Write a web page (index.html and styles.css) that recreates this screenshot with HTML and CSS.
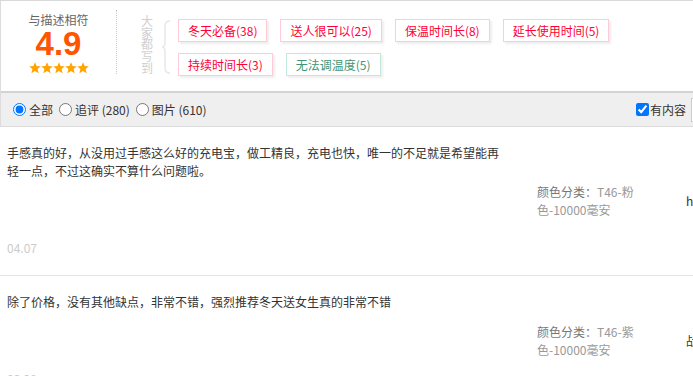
FILE: index.html
```html
<!doctype html>
<html lang="zh-CN">
  <head>
    <meta charset="UTF-8" />
    <meta name="viewport" content="width=device-width, initial-scale=1.0" />
    <title>累计评价</title>
    <link rel="stylesheet" href="styles.css">
  </head>
  <body>
    <div class="rate-wrap">
      <div class="rate-box">
        <div class="rate-header">
          <div class="rate-score">
            <p class="score-label">与描述相符</p>
            <strong class="score-num">4.9</strong>
            <svg class="score-stars" width="60" height="12" viewBox="0 0 60 12">
              <g fill="#ffa400">
                <polygon points="6,0.3 7.6,4.1 11.7,4.4 8.6,7.1 9.6,11.3 6,9.1 2.4,11.3 3.4,7.1 0.3,4.4 4.4,4.1" />
                <polygon transform="translate(12 0)" points="6,0.3 7.6,4.1 11.7,4.4 8.6,7.1 9.6,11.3 6,9.1 2.4,11.3 3.4,7.1 0.3,4.4 4.4,4.1" />
                <polygon transform="translate(24 0)" points="6,0.3 7.6,4.1 11.7,4.4 8.6,7.1 9.6,11.3 6,9.1 2.4,11.3 3.4,7.1 0.3,4.4 4.4,4.1" />
                <polygon transform="translate(36 0)" points="6,0.3 7.6,4.1 11.7,4.4 8.6,7.1 9.6,11.3 6,9.1 2.4,11.3 3.4,7.1 0.3,4.4 4.4,4.1" />
                <polygon transform="translate(48 0)" points="6,0.3 7.6,4.1 11.7,4.4 8.6,7.1 9.6,11.3 6,9.1 2.4,11.3 3.4,7.1 0.3,4.4 4.4,4.1" />
              </g>
            </svg>
          </div>

          <div class="tag-title">大家都写到</div>
          <svg class="tag-brace" width="10" height="54" viewBox="0 0 10 54">
            <path d="M9 1 Q4 1 4 6 L4 22 Q4 27 1 27 Q4 27 4 32 L4 48 Q4 53 9 53" fill="none" stroke="#e8e8e8" stroke-width="1.5" />
          </svg>

          <div class="tag-list">
            <span class="tag">冬天必备(38)</span>
            <span class="tag">送人很可以(25)</span>
            <span class="tag">保温时间长(8)</span>
            <span class="tag">延长使用时间(5)</span>
            <span class="tag">持续时间长(3)</span>
            <span class="tag tag-neg">无法调温度(5)</span>
          </div>
        </div>

        <div class="rate-filter">
          <label class="filter-opt"><input type="radio" name="rate" checked />全部</label>
          <label class="filter-opt"><input type="radio" name="rate" />追评 (280)</label>
          <label class="filter-opt"><input type="radio" name="rate" />图片 (610)</label>
          <div class="filter-right">
            <label class="filter-check"><input type="checkbox" checked />有内容</label>
            <div class="filter-sort">按默认</div>
          </div>
        </div>
      </div>

      <div class="rate-list">
        <div class="rate-item">
          <div class="rate-main">
            <p class="rate-text">手感真的好，从没用过手感这么好的充电宝，做工精良，充电也快，唯一的不足就是希望能再轻一点，不过这确实不算什么问题啦。</p>
            <p class="rate-date">04.07</p>
          </div>
          <div class="rate-sku"><span class="sku-label">颜色分类：</span>T46-粉色-10000毫安</div>
          <div class="rate-user">h**1（匿名）</div>
        </div>

        <div class="rate-item">
          <div class="rate-main">
            <p class="rate-text">除了价格，没有其他缺点，非常不错，强烈推荐冬天送女生真的非常不错</p>
            <p class="rate-date">03.29</p>
          </div>
          <div class="rate-sku"><span class="sku-label">颜色分类：</span>T46-紫色-10000毫安</div>
          <div class="rate-user">战**（匿名）</div>
        </div>
      </div>
    </div>
  </body>
</html>
```

FILE: styles.css
```css
* {
  margin: 0;
  padding: 0;
  box-sizing: border-box;
}

html,
body {
  overflow: hidden;
}

body {
  font-family: "Noto Sans CJK SC", "Liberation Sans", sans-serif;
  font-size: 12px;
  color: #333;
  background: #fff;
}

.rate-wrap {
  width: 790px;
}

/* 顶部评分 + 标签 */
.rate-box {
  border-top: 1px solid #d9d9d9;
  border-left: 1px solid #dcdcdc;
}

.rate-header {
  display: flex;
  align-items: flex-start;
  height: 90px;
}

.rate-score {
  flex: none;
  width: 116px;
  height: 64px;
  margin-top: 9px;
  padding-top: 2px;
  border-right: 1px dotted #c8c8c8;
  text-align: center;
}

.score-label {
  color: #666;
  line-height: 16px;
}

.score-num {
  display: block;
  font-family: "Liberation Sans", Arial, sans-serif;
  font-size: 33px;
  line-height: 30px;
  color: #ff5500;
  margin-top: 1px;
}

.score-stars {
  display: block;
  margin: 3px auto 0;
}

.tag-title {
  width: 12px;
  margin-left: 24px;
  margin-top: 14px;
  line-height: 11.7px;
  color: #cfcfcf;
}

.tag-brace {
  display: block;
  margin-left: 8px;
  margin-top: 19px;
}

.tag-list {
  flex: none;
  width: 460px;
  display: flex;
  flex-wrap: wrap;
  gap: 11px 13px;
  margin-left: 7px;
  margin-top: 18px;
}

.tag {
  height: 23px;
  line-height: 21px;
  padding: 0 9px;
  border: 1px solid #ffcbd6;
  color: #ff0036;
  box-shadow: 2px 2px 2px #eee;
  white-space: nowrap;
}

.tag-neg {
  border-color: #c2e9db;
  color: #3f9676;
}

/* 筛选条 */
.rate-filter {
  display: flex;
  align-items: center;
  height: 36px;
  padding-left: 6px;
  background: #efefef;
  border-top: 2px solid #d3d3d3;
  border-bottom: 1px solid #dcdcdc;
}

.filter-opt {
  display: flex;
  align-items: center;
}

.filter-opt input {
  margin: 0 3px 0 6px;
}

.filter-right {
  margin-left: auto;
  display: flex;
  align-items: center;
}

.filter-check {
  display: flex;
  align-items: center;
}

.filter-check input {
  margin: 0 1px 0 0;
}

.filter-sort {
  width: 90px;
  height: 24px;
  line-height: 22px;
  margin: 0 9px 0 5px;
  padding-left: 6px;
  border: 1px solid #ccc;
  background: #fff;
}

/* 评价列表 */
.rate-item {
  display: flex;
  align-items: center;
  padding: 17px 0 18px 7px;
  border-bottom: 1px solid #e5e5e5;
}

.rate-main {
  flex: none;
  width: 500px;
}

.rate-text {
  line-height: 18px;
}

.rate-date {
  margin-top: 59px;
  line-height: 18px;
  color: #ccc;
}

.rate-sku {
  flex: none;
  width: 100px;
  margin-left: 30px;
  line-height: 18px;
  color: #999;
}

.sku-label {
  color: #777;
}

.rate-user {
  margin-left: 49px;
  white-space: nowrap;
}
```
